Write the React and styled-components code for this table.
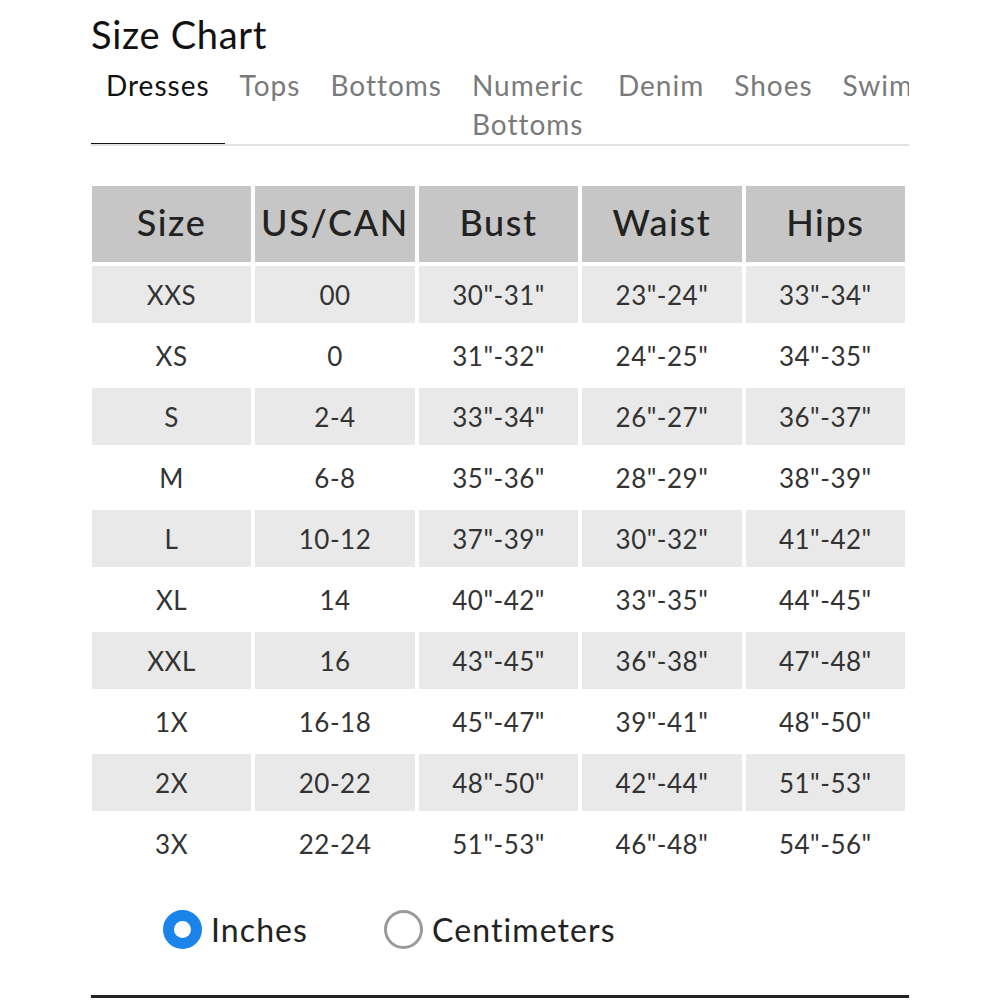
import React, { useState } from "react";
import styled, { createGlobalStyle } from "styled-components";

const GlobalStyle = createGlobalStyle`
  body {
    margin: 0;
    background: #fff;
    font-family: "Lato", "Open Sans", sans-serif;
    color: #222;
  }
`;

const tabs = ["Dresses", "Tops", "Bottoms", "Numeric Bottoms", "Denim", "Shoes", "Swim"];

const rows = [
  ["XXS", "00", '30"-31"', '23"-24"', '33"-34"'],
  ["XS", "0", '31"-32"', '24"-25"', '34"-35"'],
  ["S", "2-4", '33"-34"', '26"-27"', '36"-37"'],
  ["M", "6-8", '35"-36"', '28"-29"', '38"-39"'],
  ["L", "10-12", '37"-39"', '30"-32"', '41"-42"'],
  ["XL", "14", '40"-42"', '33"-35"', '44"-45"'],
  ["XXL", "16", '43"-45"', '36"-38"', '47"-48"'],
  ["1X", "16-18", '45"-47"', '39"-41"', '48"-50"'],
  ["2X", "20-22", '48"-50"', '42"-44"', '51"-53"'],
  ["3X", "22-24", '51"-53"', '46"-48"', '54"-56"'],
];

const Page = styled.div`
  width: 818px;
  margin-left: 91px;
  padding-top: 11px;
`;

const Title = styled.h1`
  margin: 0;
  font-size: 38px;
  font-weight: 400;
  line-height: 46px;
  letter-spacing: 0.7px;
  color: #111;
`;

const TabBar = styled.div`
  display: flex;
  align-items: flex-start;
  margin-top: 9px;
  overflow: hidden;
  border-bottom: 2px solid #e2e2e2;
`;

const Tab = styled.div`
  flex: none;
  padding: 0 15px 2px;
  max-width: ${(p) => (p.$wrap ? "116px" : "none")};
  font-size: 28px;
  line-height: 39px;
  letter-spacing: 1px;
  color: ${(p) => (p.$active ? "#111" : "#7a7a7a")};
  box-shadow: ${(p) => (p.$active ? "inset 0 -3px 0 #111" : "none")};
  align-self: stretch;
  margin-bottom: -2px;
`;

const Table = styled.table`
  border-collapse: separate;
  border-spacing: 4px;
  margin: 36px 0 0 -3px;
  table-layout: fixed;
`;

const HeadCell = styled.th`
  width: 160px;
  height: 76px;
  padding: 0 0 4px;
  box-sizing: border-box;
  background: #c6c6c6;
  font-size: 36px;
  font-weight: 500;
  color: #222;
  letter-spacing: 1.6px;
  text-align: center;
`;

const Cell = styled.td`
  height: 57px;
  padding: 0;
  background: ${(p) => (p.$shade ? "#e9e9e9" : "#fff")};
  font-size: 26px;
  line-height: 30px;
  color: #333;
  letter-spacing: 0.5px;
  text-align: center;
`;

const Units = styled.div`
  display: flex;
  align-items: center;
  gap: 76px;
  margin: 34px 0 0 72px;
`;

const Option = styled.label`
  display: flex;
  align-items: center;
  gap: 9px;
  font-size: 32px;
  color: #222;
  letter-spacing: 1.1px;
  cursor: pointer;
`;

const Dot = styled.span`
  box-sizing: border-box;
  width: 39px;
  height: 39px;
  border-radius: 50%;
  background: #fff;
  border: ${(p) => (p.$on ? "11px solid #1b84ea" : "3px solid #9a9a9a")};
`;

const Rule = styled.div`
  margin-top: 46px;
  height: 3px;
  background: #222;
`;

export default function App() {
  const [unit, setUnit] = useState("in");
  return (
    <Page>
      <GlobalStyle />
      <Title>Size Chart</Title>
      <TabBar>
        {tabs.map((t, i) => (
          <Tab key={t} $active={i === 0} $wrap={t === "Numeric Bottoms"}>
            {t}
          </Tab>
        ))}
      </TabBar>
      <Table>
        <thead>
          <tr>
            {["Size", "US/CAN", "Bust", "Waist", "Hips"].map((h) => (
              <HeadCell key={h}>{h}</HeadCell>
            ))}
          </tr>
        </thead>
        <tbody>
          {rows.map((r, i) => (
            <tr key={r[0]}>
              {r.map((c, j) => (
                <Cell key={j} $shade={i % 2 === 0}>
                  {c}
                </Cell>
              ))}
            </tr>
          ))}
        </tbody>
      </Table>
      <Units>
        <Option onClick={() => setUnit("in")}>
          <Dot $on={unit === "in"} />
          Inches
        </Option>
        <Option onClick={() => setUnit("cm")}>
          <Dot $on={unit === "cm"} />
          Centimeters
        </Option>
      </Units>
      <Rule />
    </Page>
  );
}
